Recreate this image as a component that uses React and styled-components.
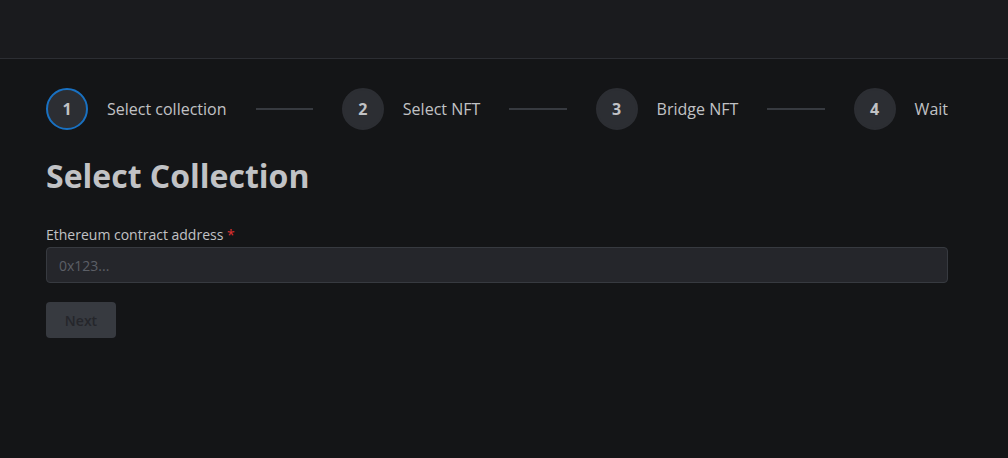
import React from 'react';
import styled, { createGlobalStyle } from 'styled-components';

const Global = createGlobalStyle`
    html, body {
        margin: 0;
        padding: 0;
        background: #141517;
        font-family: "Open Sans", "Noto Sans", sans-serif;
        color: #C1C2C5;
    }
    * { box-sizing: border-box; }
`;

const Page = {
    Header: styled.header`
        height: 59px;
        background-color: #1A1B1E;
        border-bottom: 1px solid #2C2E33;
    `,
    Main: styled.main`
        padding: 29px 60px 0 46px;
    `,
}

const Stepper = {
    Row: styled.div`
        display: flex;
        align-items: center;
    `,
    Step: styled.div`
        display: flex;
        align-items: center;
    `,
    Icon: styled.div`
        width: 42px;
        height: 42px;
        border-radius: 50%;
        background-color: #2C2E33;
        border: 2px solid ${p => (p.active ? '#1971C2' : '#2C2E33')};
        display: flex;
        align-items: center;
        justify-content: center;
        font-size: 16px;
        font-weight: 700;
        color: #C1C2C5;
    `,
    Label: styled.span`
        margin-left: 19px;
        font-size: 16px;
        color: #C1C2C5;
    `,
    Separator: styled.div`
        flex: 1;
        height: 2px;
        margin: 0 29px;
        background-color: #373A40;
    `,
}

const Form = {
    Title: styled.h1`
        margin: 25px 0 0;
        font-size: 32px;
        line-height: 1.3;
        font-weight: 700;
        color: #C1C2C5;
    `,
    Label: styled.label`
        display: block;
        margin-top: 27px;
        font-size: 14px;
        font-weight: 500;
        line-height: 1.55;
        color: #C1C2C5;
    `,
    Required: styled.span`
        color: #E03131;
    `,
    Input: styled.input`
        display: block;
        width: 100%;
        height: 36px;
        margin-top: 2px;
        padding: 0 12px;
        background-color: #25262B;
        border: 1px solid #373A40;
        border-radius: 4px;
        font-family: inherit;
        font-size: 14px;
        color: #C1C2C5;
        outline: none;
        &::placeholder { color: #5C5F66; }
    `,
    Button: styled.button`
        margin-top: 19px;
        width: 70px;
        height: 36px;
        border: none;
        border-radius: 4px;
        background-color: #373A40;
        color: #25262B;
        font-family: inherit;
        font-size: 14px;
        font-weight: 600;
    `,
}

const steps = ['Select collection', 'Select NFT', 'Bridge NFT', 'Wait'];

function App() {
    return (
        <>
            <Global />
            <Page.Header />
            <Page.Main>
                <Stepper.Row>
                    {steps.map((s, i) => (
                        <React.Fragment key={s}>
                            {i > 0 && <Stepper.Separator />}
                            <Stepper.Step>
                                <Stepper.Icon active={i === 0}>{i + 1}</Stepper.Icon>
                                <Stepper.Label>{s}</Stepper.Label>
                            </Stepper.Step>
                        </React.Fragment>
                    ))}
                </Stepper.Row>
                <Form.Title>Select Collection</Form.Title>
                <Form.Label>
                    Ethereum contract address <Form.Required>*</Form.Required>
                </Form.Label>
                <Form.Input placeholder="0x123..." />
                <Form.Button disabled>Next</Form.Button>
            </Page.Main>
        </>
    );
}

export default App;
